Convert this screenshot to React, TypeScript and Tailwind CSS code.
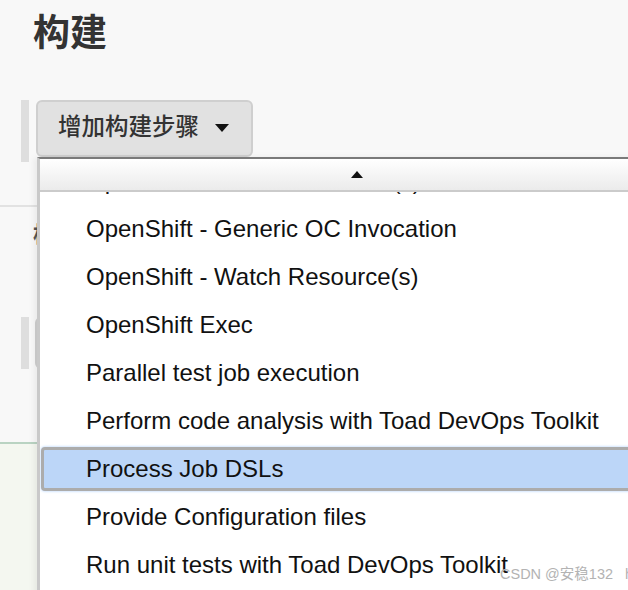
import React from "react";

const items = [
  "OpenShift - Delete Resource(s)",
  "OpenShift - Generic OC Invocation",
  "OpenShift - Watch Resource(s)",
  "OpenShift Exec",
  "Parallel test job execution",
  "Perform code analysis with Toad DevOps Toolkit",
  "Process Job DSLs",
  "Provide Configuration files",
  "Run unit tests with Toad DevOps Toolkit",
  "Send files or execute commands over SSH",
];

const selected = "Process Job DSLs";

export default function App() {
  return (
    <div
      className="relative h-[590px] w-[628px] overflow-hidden bg-[#f8f8f8] text-[#333]"
      style={{ fontFamily: '"Liberation Sans", "Noto Sans CJK SC", sans-serif' }}
    >
      {/* page behind the menu */}
      <div className="flex h-[442px] flex-col">
        <h1 className="pl-[33px] pt-[11px] text-[37px] font-bold leading-[46px] text-[#333]">构建</h1>
        <div className="mt-[43px] flex items-start gap-[7px] pl-[21px]">
          <div className="h-[62px] w-[8px] bg-[#dedede]" />
          <button
            type="button"
            className="flex h-[57px] w-[217px] items-center gap-[16px] rounded-[6px] border-2 border-[#cfcfcf] bg-[#e1e1e1] pl-[20px] pb-[2px] text-[23.5px] font-medium text-[#333]"
          >
            增加构建步骤
            <span className="h-0 w-0 border-x-[7px] border-t-[8px] border-x-transparent border-t-[#111]" />
          </button>
        </div>
        <div className="mt-[43px] h-[2px] w-full bg-[#e2e2e2]" />
        <p className="pl-[33px] pt-[14px] text-[22px] font-bold leading-[28px] text-[#555]">构建后操作</p>
        <div className="mt-[68px] flex items-start gap-[6px] pl-[21px]">
          <div className="h-[52px] w-[8px] bg-[#dedede]" />
          <div className="h-[52px] w-[120px] rounded-[6px] border-2 border-[#cfcfcf] bg-[#e1e1e1]" />
        </div>
      </div>
      <div className="h-[2px] w-full bg-[#b9d3c2]" />
      <div className="h-full w-full bg-[#f4f7f0]" />

      {/* dropdown menu */}
      <div className="absolute left-[37px] top-[157px] flex h-[460px] w-[640px] flex-col border-l-[3px] border-t-2 border-l-[#c9c9c9] border-t-[#7a7a7a] bg-white shadow-[-3px_0_6px_rgba(0,0,0,0.06)]">
        <div className="relative z-10 flex h-[33px] shrink-0 items-center border-b-2 border-[#cbcbcb] bg-gradient-to-b from-white to-[#ebebeb] pl-[311px]">
          <span className="h-0 w-0 border-x-[6px] border-b-[7px] border-x-transparent border-b-[#111]" />
        </div>
        <ul className="flex flex-col overflow-hidden text-[24px] leading-[26px] text-[#111]">
          {items.map((item, i) => (
            <li key={item} className={`h-[48px] shrink-0 py-[2px] ${i === 0 ? "mt-[-35px]" : ""}`}>
              {item === selected ? (
                <div className="ml-[1px] flex h-full items-center rounded-[4px] border-[3px] border-[#acacac] bg-[#bcd6f8] pl-[42px] shadow-[0_0_3px_#a8cdfc]">
                  {item}
                </div>
              ) : (
                <div className="flex h-full items-center pl-[46px]">{item}</div>
              )}
            </li>
          ))}
        </ul>
      </div>

      {/* watermark */}
      <div className="absolute left-[500px] top-[564px] whitespace-nowrap text-[14.5px] text-[#b3b3b3]">
        CSDN @安稳132&nbsp;&nbsp;&nbsp;h
      </div>
    </div>
  );
}
